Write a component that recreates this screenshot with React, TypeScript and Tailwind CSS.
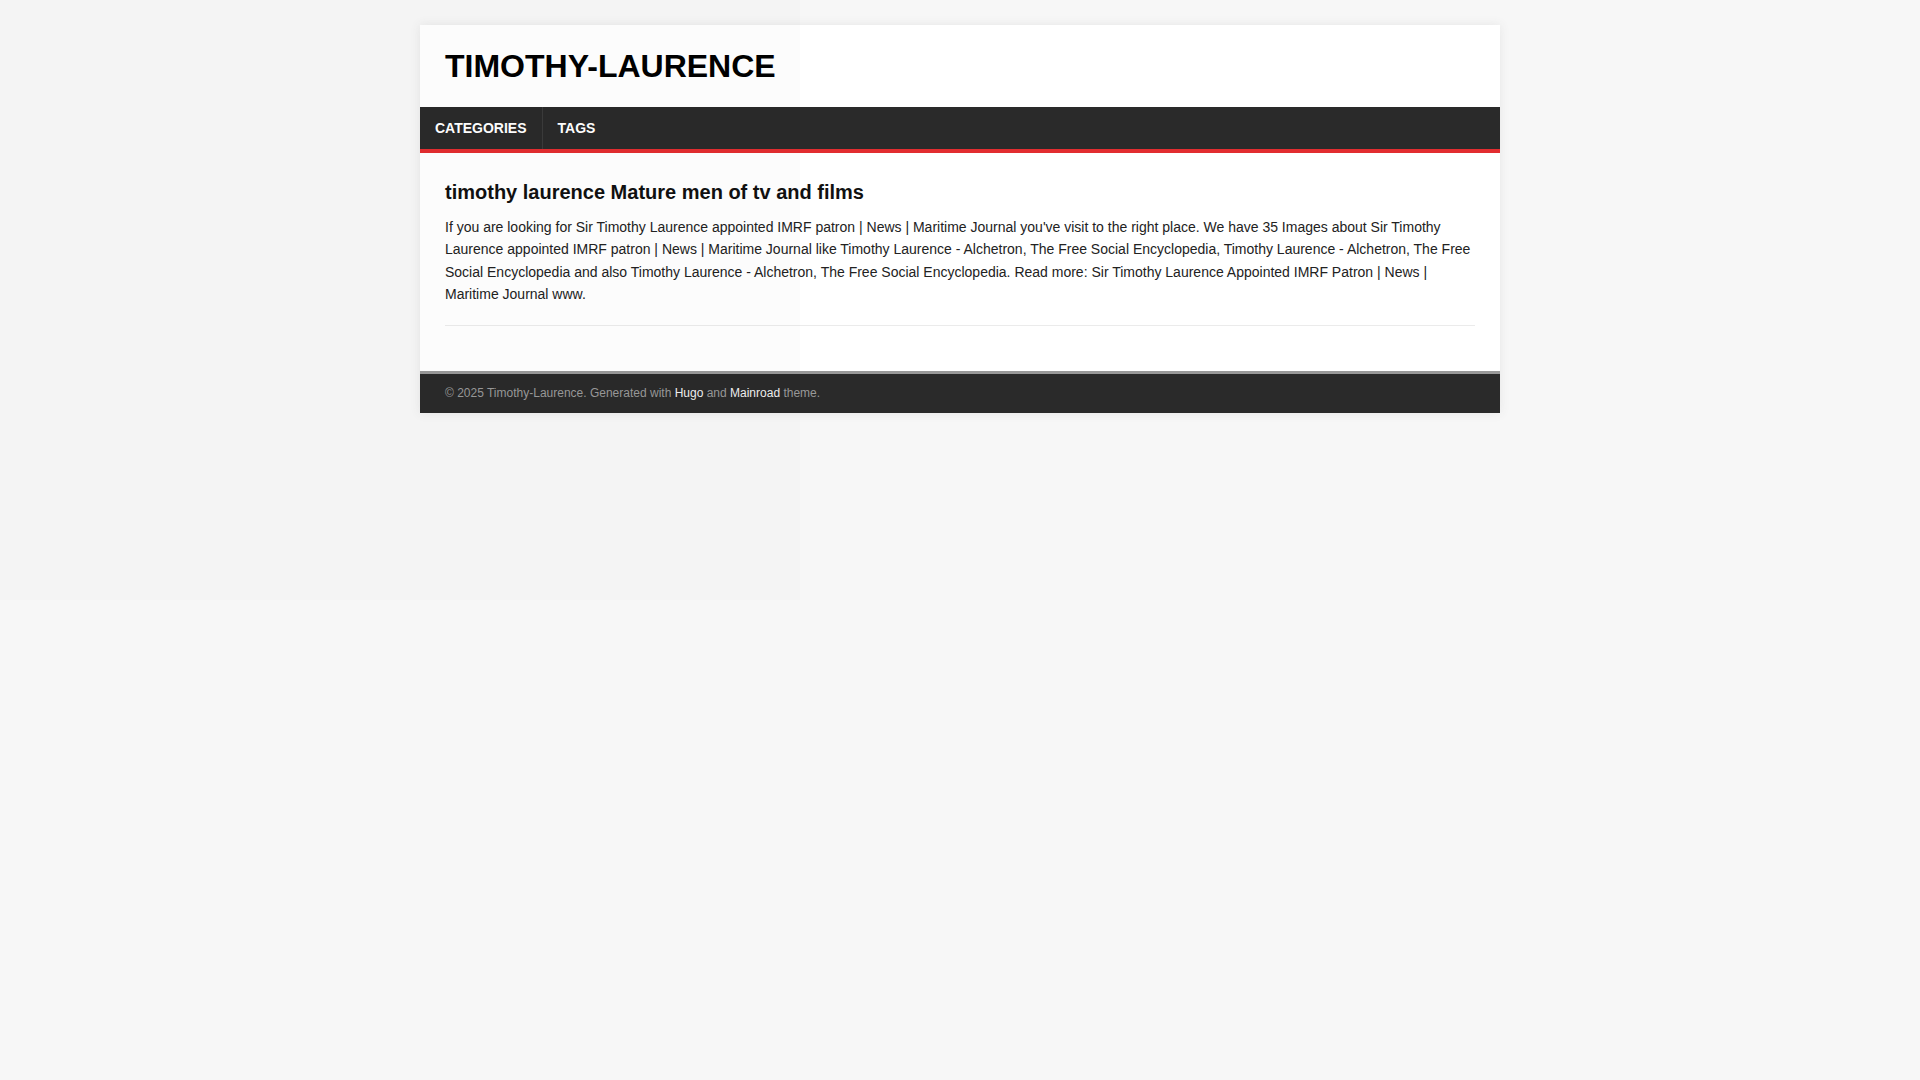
const menu = ["Categories", "Tags"];

export default function App() {
  return (
    <div className="relative min-h-screen bg-[#f7f7f7] pt-[25px] pb-[25px] font-['Liberation_Sans',Arial,sans-serif] text-[#222]">
      <div className="mx-auto w-[1080px] bg-white shadow-[0_0_10px_rgba(77,77,77,0.1)]">
        <header className="p-[25px]">
          <a className="block text-[32px] font-bold uppercase leading-[32px] text-black">Timothy-Laurence</a>
        </header>

        <nav className="border-b-4 border-[#e22d30] bg-[#2a2a2a]">
          <ul className="flex">
            {menu.map((item) => (
              <li key={item} className="border-r border-[#3b3b3b] last:border-r-0">
                <a className="block px-[15px] py-[10px] text-[14px] font-bold uppercase leading-[22px] text-white">
                  {item}
                </a>
              </li>
            ))}
          </ul>
        </nav>

        <main className="p-[25px]">
          <h1 className="text-[20px] font-bold leading-[28px] text-[#111]">
            timothy laurence Mature men of tv and films
          </h1>
          <p className="mt-[10px] text-[14px] leading-[22.4px] text-[#222]">
            If you are looking for Sir Timothy Laurence appointed IMRF patron | News | Maritime Journal you've visit to the
            right place. We have 35 Images about Sir Timothy Laurence appointed IMRF patron | News | Maritime Journal like
            Timothy Laurence - Alchetron, The Free Social Encyclopedia, Timothy Laurence - Alchetron, The Free Social
            Encyclopedia and also Timothy Laurence - Alchetron, The Free Social Encyclopedia. Read more: Sir Timothy
            Laurence Appointed IMRF Patron | News | Maritime Journal www.
          </p>
          <hr className="mt-[19px] border-t border-[#ebebeb]" />
          <div className="h-[20px]" />
        </main>

        <footer className="border-t-[3px] border-[#999] bg-[#2a2a2a] px-[25px] py-[10px] text-[12px] leading-[19.2px] text-[#999]">
          © 2025 Timothy-Laurence. Generated with <a className="text-[#f0f0f0]">Hugo</a> and{" "}
          <a className="text-[#f0f0f0]">Mainroad</a> theme.
        </footer>
      </div>

      <div className="pointer-events-none absolute left-0 top-0 h-[600px] w-[800px] bg-[rgba(0,0,0,0.012)]" />
    </div>
  );
}
